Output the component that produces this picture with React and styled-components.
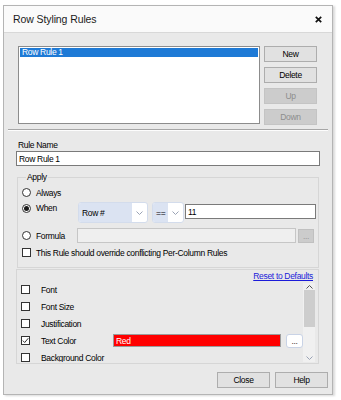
import React from 'react'
import styled, { createGlobalStyle } from 'styled-components'

// row styling rules dialog

const GlobalStyle = createGlobalStyle`
  html, body {
    margin: 0;
    padding: 0;
    background: #ffffff;
  }
  body {
    font-family: "Liberation Sans", Arial, sans-serif;
    font-size: 8.5px;
    letter-spacing: -0.32px;
    color: #000;
  }
`;

const Page = styled.div`
  width: 341px;
  height: 400px;
  box-sizing: border-box;
  padding: 5px 8px 5px 3px;
  background: #fff;
`;

const Dialog = styled.div`
  width: 330px;
  height: 390px;
  box-sizing: border-box;
  border: 1px solid #b4b4b4;
  background: #e9e9e9;
  display: flex;
  flex-direction: column;
  box-shadow: 2px 1px 2px rgba(0, 0, 0, 0.15);
`;

const TitleBar = styled.div`
  height: 26px;
  flex: none;
  display: flex;
  align-items: center;
  justify-content: space-between;
  padding: 0 10px 0 9px;
  background: #fafafa;
  border-bottom: 1px solid #d8d8d8;
`;

const Title = styled.div`
  font-size: 10.5px;
  letter-spacing: -0.1px;
  color: #1a1a1a;
`;

const Body = styled.div`
  flex: 1;
  display: flex;
  flex-direction: column;
  padding: 13px 12px 0 12px;
`;

const TopRow = styled.div`
  display: flex;
  gap: 4px;
  margin: 0 3px 0 2px;
`;

const ListBox = styled.div`
  flex: 1;
  height: 78px;
  box-sizing: border-box;
  border: 1px solid #8c8c8c;
  background: #fff;
  padding: 1px;
`;

const ListItem = styled.div`
  height: 9px;
  line-height: 9px;
  padding-left: 2px;
  background: ${p => (p.$selected ? '#1e7ad6' : 'transparent')};
  color: ${p => (p.$selected ? '#fff' : '#000')};
`;

const ButtonColumn = styled.div`
  width: 53px;
  display: flex;
  flex-direction: column;
  gap: 5px;
`;

const Button = styled.div`
  width: ${p => p.$width || 53}px;
  height: 16px;
  box-sizing: border-box;
  display: flex;
  align-items: center;
  justify-content: center;
  border: 1px solid ${p => (p.$disabled ? '#c4c4c4' : '#adadad')};
  background: ${p => (p.$disabled ? '#cccccc' : '#e1e1e1')};
  color: ${p => (p.$disabled ? '#8d8d8d' : '#000')};
`;

const Separator = styled.div`
  margin: 4px -8px 0;
  border-top: 1px solid #a6a6a6;
  border-bottom: 1px solid #fdfdfd;
`;

const FieldLabel = styled.div`
  margin-top: 8px;
  padding-left: 2px;
  line-height: 12px;
`;

const TextInput = styled.div`
  height: 15px;
  box-sizing: border-box;
  border: 1px solid ${p => (p.$disabled ? '#c6c6c6' : '#7a7a7a')};
  background: ${p => (p.$disabled ? '#efefef' : '#fff')};
  padding-left: 2px;
  display: flex;
  align-items: center;
  flex: ${p => (p.$grow ? 1 : 'none')};
`;

const GroupBox = styled.fieldset`
  margin: 6px 1px 0 1px;
  padding: 0 2px 7px 4px;
  border: 1px solid #d6d6d6;
  min-width: 0;
`;

const Legend = styled.legend`
  padding: 0 1px;
  margin-left: 4px;
  line-height: 10px;
`;

const OptionRow = styled.div`
  display: flex;
  align-items: ${p => (p.$top ? 'flex-start' : 'center')};
  height: ${p => p.$h || 15}px;
  margin-top: ${p => p.$mt || 0}px;
`;

const OptionLabel = styled.div`
  width: ${p => p.$w}px;
  flex: none;
  display: flex;
  align-items: center;
  gap: 5px;
  margin-top: ${p => p.$mt || 0}px;
`;

const Radio = styled.span`
  width: 9px;
  height: 9px;
  box-sizing: border-box;
  border-radius: 50%;
  border: 1px solid #333;
  background: #fff;
  display: flex;
  align-items: center;
  justify-content: center;
  &::after {
    content: '';
    width: 5px;
    height: 5px;
    border-radius: 50%;
    background: ${p => (p.$checked ? '#1a1a1a' : 'transparent')};
  }
`;

const Box = styled.span`
  width: 9px;
  height: 9px;
  flex: none;
  box-sizing: border-box;
  border: 1px solid #333;
  background: #fff;
  display: flex;
  align-items: center;
  justify-content: center;
`;

const Combo = styled.div`
  width: ${p => p.$w}px;
  height: 21px;
  flex: none;
  box-sizing: border-box;
  margin-top: 2px;
  margin-right: ${p => p.$mr || 0}px;
  border: 1px solid #d3dcec;
  border-radius: 3px;
  background: #fff;
  display: flex;
  overflow: hidden;
`;

const ComboValue = styled.div`
  flex: 1;
  background: #dbe3f2;
  padding-left: 3px;
  display: flex;
  align-items: center;
`;

const ComboArrow = styled.div`
  width: 15px;
  display: flex;
  align-items: center;
  justify-content: center;
`;

const Ellipsis = styled.div`
  width: ${p => p.$w || 16}px;
  height: 14px;
  flex: none;
  box-sizing: border-box;
  margin-left: ${p => p.$ml || 2}px;
  margin-right: ${p => p.$mr || 0}px;
  border: 1px solid ${p => (p.$disabled ? '#c0c0c0' : '#c9d3e6')};
  border-radius: ${p => (p.$disabled ? 0 : 3)}px;
  background: ${p => (p.$disabled ? '#cccccc' : '#fff')};
  color: ${p => (p.$disabled ? '#9a9a9a' : '#333')};
  display: flex;
  align-items: center;
  justify-content: center;
  line-height: 8px;
`;

const Panel = styled.div`
  margin: 1px 1px 0 0;
  height: 95px;
  box-sizing: border-box;
  border: 1px solid #d6d6d6;
  padding: 1px 0 1px 0;
  display: flex;
  flex-direction: column;
`;

const ResetLink = styled.a`
  align-self: flex-end;
  margin-right: 5px;
  line-height: 10px;
  color: #1b1bd9;
  text-decoration: underline;
`;

const PropArea = styled.div`
  display: flex;
  height: 81px;
`;

const PropList = styled.div`
  flex: 1;
  overflow: hidden;
`;

const PropRow = styled.div`
  height: 17px;
  display: flex;
  align-items: center;
  padding-left: 4px;
`;

const PropName = styled.div`
  width: 72px;
  margin-left: 11px;
  flex: none;
`;

const ColorField = styled.div`
  width: 168px;
  height: 13px;
  box-sizing: border-box;
  border: 1px solid #9b9b9b;
  background: #ff0000;
  color: #fff;
  padding-left: 2px;
  display: flex;
  align-items: center;
`;

const Scrollbar = styled.div`
  width: 12px;
  margin: 2px 3px 0 0;
  background: #f0f0f0;
  display: flex;
  flex-direction: column;
  align-items: center;
  justify-content: space-between;
  padding: 2px 0;
  box-sizing: border-box;
`;

const Thumb = styled.div`
  width: 11px;
  height: 37px;
  background: #cdcdcd;
  margin-top: 1px;
  margin-bottom: auto;
`;

const Footer = styled.div`
  display: flex;
  justify-content: flex-end;
  gap: 5px;
  margin: 8px -8px 0 0;
`;

const Chevron = ({ up }) => (
  <svg width="7" height="4" viewBox="0 0 7 4">
    <path d={up ? 'M0.5 3.5 L3.5 0.5 L6.5 3.5' : 'M0.5 0.5 L3.5 3.5 L6.5 0.5'} fill="none" stroke={up ? '#555' : '#9aa3b5'} strokeWidth="1" />
  </svg>
);

const Check = () => (
  <svg width="7" height="7" viewBox="0 0 7 7">
    <path d="M0.8 3.6 L2.7 5.5 L6.3 1.2" fill="none" stroke="#333" strokeWidth="1" />
  </svg>
);

const props = [
  { name: 'Font' },
  { name: 'Font Size' },
  { name: 'Justification' },
  { name: 'Text Color', checked: true, color: 'Red' },
  { name: 'Background Color' },
];

const App = () => {
  return (
    <Page>
      <GlobalStyle />
      <Dialog>
        <TitleBar>
          <Title>Row Styling Rules</Title>
          <svg width="7" height="7" viewBox="0 0 7 7">
            <path d="M0.8 0.8 L6.2 6.2 M6.2 0.8 L0.8 6.2" stroke="#111" strokeWidth="1.7" />
          </svg>
        </TitleBar>
        <Body>
          <TopRow>
            <ListBox>
              <ListItem $selected>Row Rule 1</ListItem>
            </ListBox>
            <ButtonColumn>
              <Button>New</Button>
              <Button>Delete</Button>
              <Button $disabled>Up</Button>
              <Button $disabled>Down</Button>
            </ButtonColumn>
          </TopRow>
          <Separator />
          <FieldLabel>Rule Name</FieldLabel>
          <TextInput>Row Rule 1</TextInput>
          <GroupBox>
            <Legend>Apply</Legend>
            <OptionRow $mt={3}>
              <OptionLabel $w={56}><Radio />Always</OptionLabel>
            </OptionRow>
            <OptionRow $top $h={25}>
              <OptionLabel $w={56} $mt={3}><Radio $checked />When</OptionLabel>
              <Combo $w={70} $mr={4}>
                <ComboValue>Row #</ComboValue>
                <ComboArrow><Chevron /></ComboArrow>
              </Combo>
              <Combo $w={32} $mr={1}>
                <ComboValue>==</ComboValue>
                <ComboArrow><Chevron /></ComboArrow>
              </Combo>
              <TextInput $grow style={{ marginTop: 4 }}>11</TextInput>
            </OptionRow>
            <OptionRow $mt={3}>
              <OptionLabel $w={55}><Radio />Formula</OptionLabel>
              <TextInput $grow $disabled />
              <Ellipsis $disabled $mr={2}>...</Ellipsis>
            </OptionRow>
            <OptionRow $mt={2}>
              <OptionLabel $w={250}><Box />This Rule should override conflicting Per-Column Rules</OptionLabel>
            </OptionRow>
          </GroupBox>
          <Panel>
            <ResetLink>Reset to Defaults</ResetLink>
            <PropArea>
              <PropList>
                {props.map(p => (
                  <PropRow key={p.name}>
                    <Box>{p.checked && <Check />}</Box>
                    <PropName>{p.name}</PropName>
                    {p.color && (
                      <>
                        <ColorField>{p.color}</ColorField>
                        <Ellipsis $w={17} $ml={5}>...</Ellipsis>
                      </>
                    )}
                  </PropRow>
                ))}
              </PropList>
              <Scrollbar>
                <Chevron up />
                <Thumb />
                <Chevron />
              </Scrollbar>
            </PropArea>
          </Panel>
          <Footer>
            <Button>Close</Button>
            <Button>Help</Button>
          </Footer>
        </Body>
      </Dialog>
    </Page>
  )
}

export default App;
